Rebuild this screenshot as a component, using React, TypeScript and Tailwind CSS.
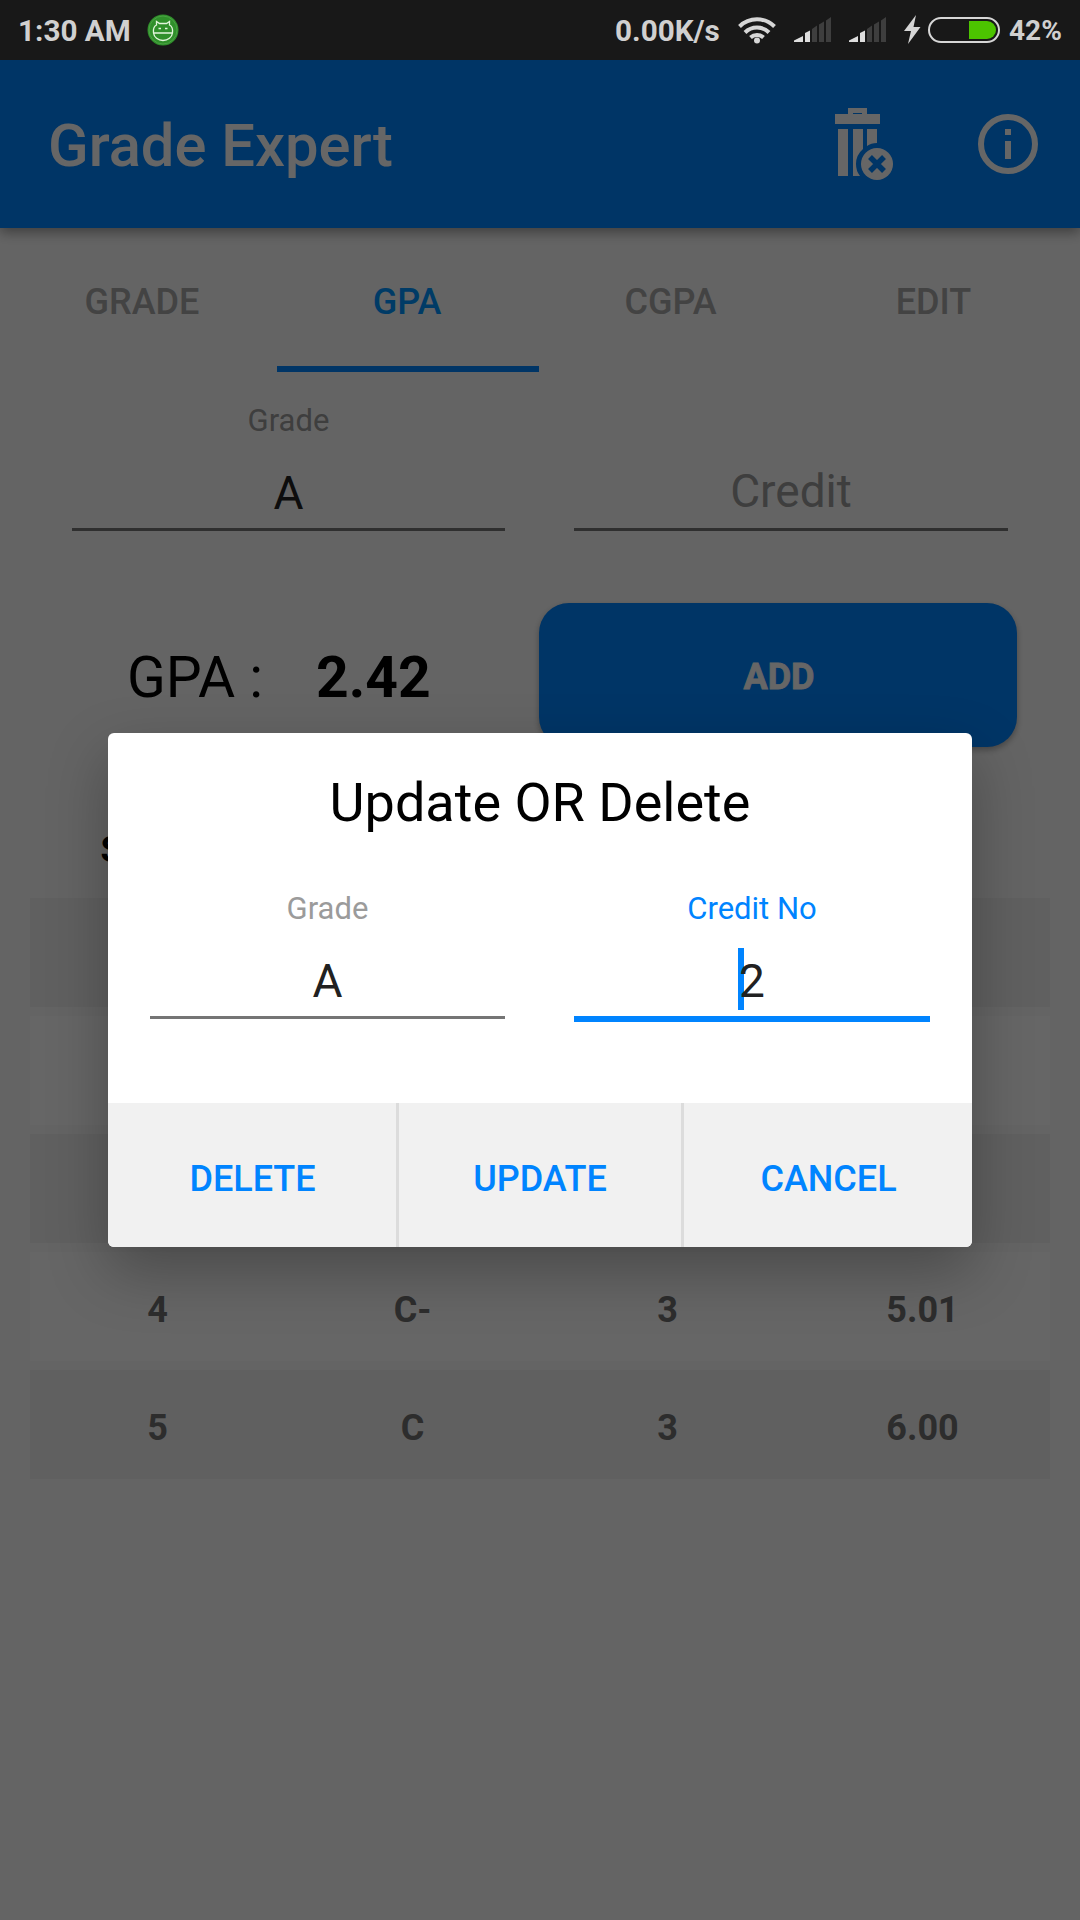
import { clsx } from "clsx";

interface RowProps {
  cells: string[];
  shaded: boolean;
}

interface FieldProps {
  label?: string;
  value?: string;
  placeholder?: string;
  focused?: boolean;
}

const tabs = ["GRADE", "GPA", "CGPA", "EDIT"];

const rows = [
  [],
  [],
  [],
  ["4", "C-", "3", "5.01"],
  ["5", "C", "3", "6.00"],
];

const Signal = () => (
  <svg width="38" height="26" viewBox="0 0 38 26">
    <path d="M0 25V23.5L9 19V25Z" fill="#dedede" />
    <path d="M11 25V16L16 13.500V25Z" fill="#dedede" />
    <path
      d="M18 25V12L23 8.500V25ZM25 25V7.500L30 4.500V25ZM32 25V3.500L37 0V25Z"
      fill="#3e3e3e"
    />
  </svg>
);

const StatusBar = () => (
  <div className="relative z-10 flex h-[60px] items-center bg-[#181818] text-[29.7px] font-bold leading-none text-[#d0d0d0]">
    <span className="ml-[18px] w-[111px] whitespace-nowrap pt-0.5">
      1:30 AM
    </span>
    <svg
      className="ml-[18px]"
      width="32"
      height="32"
      viewBox="0 0 32 32"
      fill="none"
    >
      <circle cx="16" cy="16" r="15.500" fill="#2f8f2a" />
      <circle cx="16" cy="16" r="14" stroke="#4aa244" />
      <path
        d="M6.500 19C6 15 7.500 12 9.500 11L9.500 7.500L12.500 9.500H19.500L22.500 7.500L22.500 11C24.500 12 26 15 25.500 19C25 23 21 26.500 16 26.500S7 23 6.500 19ZM6.500 19H25.500"
        stroke="#e2f5dc"
        strokeWidth="1.300"
      />
      <path d="M11.500 14.500H14M18 14.500H20.500" stroke="#e2f5dc" strokeWidth="1.500" />
    </svg>
    <div className="ml-auto flex items-center">
      <span className="w-[105px] whitespace-nowrap pt-0.5">0.00K/s</span>
      <svg
        className="ml-[18px]"
        width="38"
        height="28"
        viewBox="0 0 38 28"
        fill="none"
        stroke="#d6d6d6"
        strokeWidth="4"
      >
        <path d="M1.500 10.500A25 25 0 0 1 36.500 10.500M7 16.500A17 17 0 0 1 31 16.500M12.500 21.500A9.500 9.500 0 0 1 25.500 21.500" />
        <circle cx="19" cy="24.500" r="3" fill="#d6d6d6" stroke="none" />
      </svg>
      <div className="ml-[18px] flex gap-[17px]">
        <Signal />
        <Signal />
      </div>
      <svg
        className="ml-[17px]"
        width="17"
        height="29"
        viewBox="0 0 17 29"
        fill="#d6d6d6"
      >
        <path d="M12 0L0 16H7L4 29L16.500 12H9.500Z" />
      </svg>
      <div className="ml-[7px] flex h-[26px] w-[72px] items-center justify-end rounded-full border-2 border-[#d6d6d6] px-0.5">
        <div className="h-[18px] w-[27px] rounded-r-full bg-[#4cc400]" />
      </div>
      <span className="ml-[9px] mr-[18px] w-[53px] whitespace-nowrap pt-0.5 text-[28px]">
        42%
      </span>
    </div>
  </div>
);

const Header = () => (
  <header className="relative flex h-[168px] items-center bg-[#0084ff] pl-12 shadow-[0_4px_12px_rgba(0,0,0,0.4)]">
    <h1 className="mt-1.5 text-[59.7px] font-medium leading-none text-white">
      Grade Expert
    </h1>
    <svg
      className="ml-auto"
      width="60"
      height="74"
      viewBox="0 0 60 74"
      fill="#fff"
    >
      <path
        d="M13 1H32V7H45V17H0V7H13ZM18 6V7H27V6Z"
        fillRule="evenodd"
      />
      <path d="M3 22H13V69H3ZM18 22H28V42Q21 48 21 57Q21 64 25 69H18ZM32 22H42V36Q36 36 32 39Z" />
      <circle cx="42" cy="57" r="16" />
      <path
        d="M35 50L49 64M49 50L35 64"
        stroke="#0084ff"
        strokeWidth="5.500"
      />
    </svg>
    <svg
      className="ml-[83px] mr-[42px]"
      width="60"
      height="60"
      viewBox="0 0 60 60"
      fill="#fff"
    >
      <circle cx="30" cy="30" r="27" fill="none" stroke="#fff" strokeWidth="6" />
      <path d="M27 15H33V21H27ZM27 27H33V45H27Z" />
    </svg>
  </header>
);

const Tabs = () => (
  <nav className="grid h-36 grid-cols-[270px_262px_263px_263px] pl-[7px]">
    {tabs.map((tab) => (
      <div
        key={tab}
        className={clsx(
          "flex items-center justify-center border-b-6 pt-2.5 text-[36px] font-medium leading-none",
          tab === "GPA"
            ? "border-[#0084ff] pr-0.5 text-[#0094ff]"
            : "border-transparent text-[#a7a7a7]"
        )}
      >
        {tab}
      </div>
    ))}
  </nav>
);

const Field = ({ label, value, placeholder, focused }: FieldProps) => (
  <div className="flex flex-col text-center leading-none">
    <div
      className={clsx(
        "h-[34px] text-[31px]",
        focused ? "text-[#0084ff]" : "text-[#9b9b9b]"
      )}
    >
      {label}
    </div>
    <div
      className={clsx(
        "flex h-[89px] items-end justify-center text-[46px]",
        value ? "pb-3 text-[#212121]" : "pb-3.5 text-[#9b9b9b]"
      )}
    >
      <span className="relative">
        {focused && (
          <span className="absolute -left-[1px] -top-[10px] h-[62px] w-1.5 bg-[#0084ff]" />
        )}
        <span className="relative">{value ?? placeholder}</span>
      </span>
    </div>
    <div className={focused ? "h-1.5 bg-[#0084ff]" : "h-[3px] bg-[#757575]"} />
  </div>
);

const Row = ({ cells, shaded }: RowProps) => (
  <div
    className={clsx(
      "grid h-[109px] grid-cols-4 items-center pt-1.5 text-center text-[36px] font-bold leading-none text-[#707070]",
      shaded ? "bg-[#f0f0f0]" : "bg-white"
    )}
  >
    {cells.map((cell, i) => (
      <span key={i}>{cell}</span>
    ))}
  </div>
);

const Dialog = () => (
  <div className="absolute left-[108px] top-[733px] h-[514px] w-[864px] overflow-hidden rounded-md bg-white">
    <h2 className="pt-[43px] text-center text-[54px] leading-none text-black">
      Update OR Delete
    </h2>
    <div className="mt-[63px] grid h-[210px] grid-cols-[355px_356px] gap-[69px] px-[42px]">
      <Field label="Grade" value="A" />
      <Field label="Credit No" value="2" focused />
    </div>
    <div className="flex h-36 bg-[#f1f1f1] text-[36px] font-medium leading-none text-[#0084ff]">
      <button className="w-[291px] border-r-3 border-[#dcdcdc] pl-px pt-2">
        DELETE
      </button>
      <button className="w-[285px] border-r-3 border-[#dcdcdc] pt-2">
        UPDATE
      </button>
      <button className="flex-1 pl-px pt-2">CANCEL</button>
    </div>
  </div>
);

const App = () => {
  return (
    <div className="relative h-[1920px] w-[1080px] overflow-hidden bg-[#fafafa] font-['Roboto',sans-serif]">
      <StatusBar />
      <Header />
      <Tabs />

      <div className="mt-[33px] grid grid-cols-[433px_434px] gap-[69px] px-[72px]">
        <Field label="Grade" value="A" />
        <Field placeholder="Credit" />
      </div>

      <div className="mt-[72px] flex h-36 items-center pl-[127px] text-[57px] leading-none text-black">
        <span className="w-[189px] whitespace-pre pt-1">GPA :</span>
        <span className="pt-1 font-bold">2.42</span>
        <button className="ml-auto mr-[63px] h-36 w-[478px] rounded-[30px] bg-[#0084ff] pl-0.5 pt-1 text-[36px] font-bold text-white shadow-[0_3px_6px_rgba(0,0,0,0.3)] [-webkit-text-stroke:0.8px_white]">
          ADD
        </button>
      </div>

      <div className="mx-[30px] grid h-[151px] grid-cols-4 pt-[85px] text-center text-[36px] font-bold leading-none text-black">
        <span className="pr-1.5">Sr. No.</span>
      </div>
      <div className="mx-[30px] flex flex-col gap-[9px]">
        {rows.map((cells, i) => (
          <Row key={i} cells={cells} shaded={i % 2 === 0} />
        ))}
      </div>

      <div className="absolute inset-0 bg-black/60" />
      <div className="absolute left-[108px] top-[733px] h-[514px] w-[864px] rounded-md shadow-[0_24px_60px_rgba(0,0,0,0.28)]" />
      <Dialog />
    </div>
  );
};

export default App;
